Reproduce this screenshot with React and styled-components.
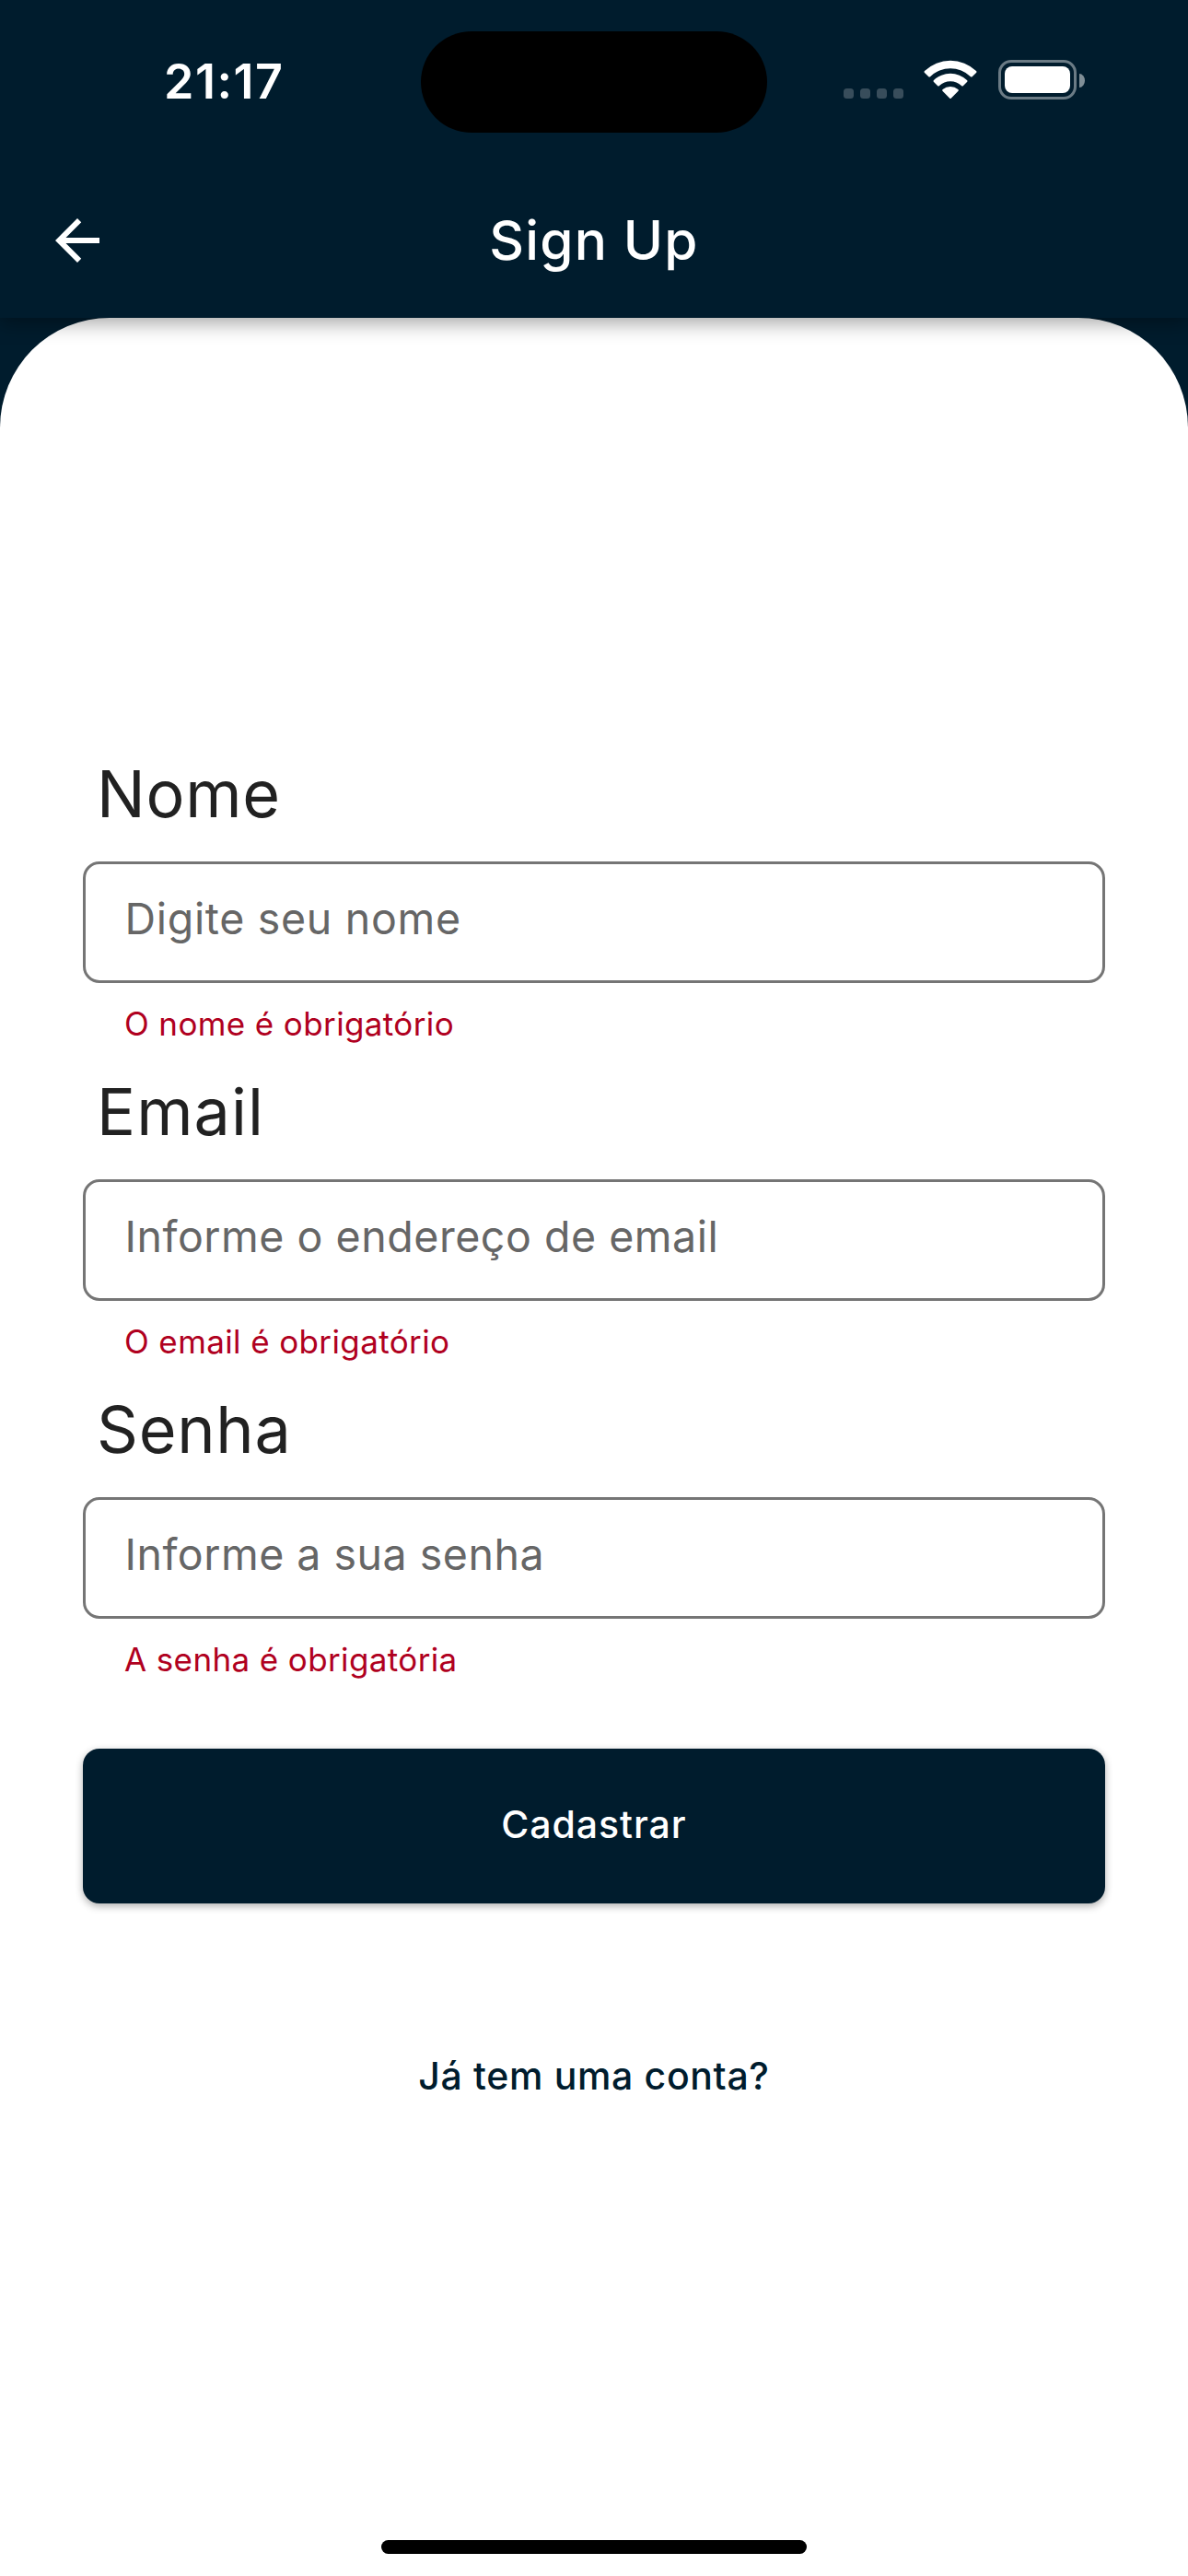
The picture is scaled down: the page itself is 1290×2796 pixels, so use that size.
import React from 'react';
import styled, { createGlobalStyle } from 'styled-components';

const navy = '#001c2d';

const GlobalStyle = createGlobalStyle`
  *, *::before, *::after { box-sizing: border-box; }
  body {
    margin: 0;
    background: #fff;
    font-family: Inter, "Liberation Sans", sans-serif;
  }
  button { font-family: inherit; border: 0; margin: 0; padding: 0; }
`;

const Screen = styled.div`
  display: flex;
  flex-direction: column;
  width: 1290px;
  height: 2796px;
  background: ${navy};
  overflow: hidden;
`;

const Header = styled.header`
  position: relative;
  z-index: 1;
  flex: none;
  background: ${navy};
  box-shadow: 0 6px 20px rgba(0, 0, 0, 0.35);
`;

const StatusBar = styled.div`
  display: grid;
  grid-template-columns: 457px 376px 457px;
  height: 177px;
`;

const Time = styled.span`
  padding-left: 178px;
  color: #fff;
  font-size: 52px;
  font-weight: 600;
  letter-spacing: 1.5px;
  line-height: 177px;
`;

const Island = styled.div`
  height: 110px;
  margin-top: 34px;
  border-radius: 55px;
  background: #000;
`;

const StatusIcons = styled.div`
  display: flex;
  align-items: flex-start;
  padding: 65px 0 0 83px;
`;

const SignalDots = styled.div`
  display: flex;
  gap: 7px;
  margin: 31px 22px 0 0;
`;

const Dot = styled.span`
  width: 11px;
  height: 11px;
  border-radius: 3.5px;
  background: rgba(255, 255, 255, 0.22);
`;

const WifiIcon = styled.svg`
  width: 58px;
  height: 42px;
  margin-right: 23px;
  fill: #fff;
`;

const Battery = styled.div`
  width: 85px;
  height: 43px;
  padding: 4px;
  border: 3px solid rgba(255, 255, 255, 0.42);
  border-radius: 14px;
`;

const BatteryLevel = styled.div`
  height: 100%;
  border-radius: 8px;
  background: #fff;
`;

const BatteryTip = styled.div`
  width: 6px;
  height: 15px;
  margin: 14.5px 0 0 3px;
  border-radius: 0 6px 6px 0 / 0 7.5px 7.5px 0;
  background: rgba(255, 255, 255, 0.5);
`;

const AppBar = styled.div`
  display: grid;
  grid-template-columns: 168px 1fr 168px;
  align-items: center;
  height: 168px;
`;

const BackButton = styled.button`
  display: flex;
  padding-left: 48px;
  background: none;
`;

const BackIcon = styled.svg`
  width: 72px;
  height: 72px;
  fill: #fff;
`;

const Title = styled.h1`
  margin: 0;
  color: #fff;
  font-size: 58.5px;
  font-weight: 500;
  letter-spacing: 1.19px;
  line-height: 72px;
  text-align: center;
`;

const Sheet = styled.main`
  display: flex;
  flex: 1;
  flex-direction: column;
  justify-content: space-between;
  align-items: center;
  padding-bottom: 24px;
  border-radius: 119px 119px 0 0;
  background: #fff;
`;

const Form = styled.form`
  display: flex;
  flex-direction: column;
  width: 1110px;
  padding-top: 468.5px;
`;

const Fields = styled.div`
  display: flex;
  flex-direction: column;
  gap: 23.5px;
`;

const Field = styled.div`
  display: flex;
  flex-direction: column;
`;

const Label = styled.label`
  margin-bottom: 25px;
  padding-left: 15px;
  color: #212121;
  font-size: 70px;
  letter-spacing: ${(p) => p.$tracking}px;
  line-height: 96px;
`;

const InputBox = styled.div`
  display: flex;
  align-items: center;
  height: 132px;
  padding: 0 42.5px 7px;
  border: 3px solid #757575;
  border-radius: 18px;
`;

const Hint = styled.span`
  color: #666;
  font-size: 46.5px;
  letter-spacing: ${(p) => p.$tracking}px;
  line-height: 60px;
  white-space: nowrap;
`;

const ErrorText = styled.p`
  margin: 20.5px 0 0;
  padding-left: 45px;
  color: #b00020;
  font-size: 35px;
  letter-spacing: 0.38px;
  line-height: 48px;
`;

const SubmitButton = styled.button`
  height: 168px;
  margin-top: 72.5px;
  padding-bottom: 3px;
  border-radius: 18px;
  background: ${navy};
  box-shadow: 0 3px 9px rgba(0, 0, 0, 0.32);
  color: #fff;
  font-size: 41px;
  font-weight: 500;
  letter-spacing: 0.94px;
`;

const LoginLink = styled.button`
  align-self: center;
  height: 144px;
  margin-top: 115.5px;
  background: none;
  color: ${navy};
  font-size: 41px;
  font-weight: 500;
  letter-spacing: 0.65px;
`;

const HomeIndicator = styled.div`
  width: 462px;
  height: 15px;
  border-radius: 8px;
  background: #000;
`;

const fields = [
  { label: 'Nome', labelTracking: 0.72, hint: 'Digite seu nome', hintTracking: 0.68, error: 'O nome é obrigatório' },
  { label: 'Email', labelTracking: 1.09, hint: 'Informe o endereço de email', hintTracking: 0.53, error: 'O email é obrigatório' },
  { label: 'Senha', labelTracking: 0.76, hint: 'Informe a sua senha', hintTracking: 0.5, error: 'A senha é obrigatória' },
];

export default function App() {
  return (
    <>
      <GlobalStyle />
      <Screen>
        <Header>
          <StatusBar>
            <Time>21:17</Time>
            <Island />
            <StatusIcons>
              <SignalDots>
                <Dot />
                <Dot />
                <Dot />
                <Dot />
              </SignalDots>
              <WifiIcon viewBox="0 0 172 126">
                <path d="M2 36A121 121 0 0 1 170 36Q173 39 170 42L157 55Q154 57 151 54A94 94 0 0 0 21 54Q18 57 15 55L2 42Q-1 39 2 36Z" />
                <path d="M32 66A78 78 0 0 1 140 66Q143 69 140 72L128 84Q125 87 122 84A52 52 0 0 0 50 84Q47 87 44 84L32 72Q29 69 32 66Z" />
                <path d="M61 96A39 39 0 0 1 111 96Q114 99 111 102L88 125Q86 127 84 125L61 102Q58 99 61 96Z" />
              </WifiIcon>
              <Battery>
                <BatteryLevel />
              </Battery>
              <BatteryTip />
            </StatusIcons>
          </StatusBar>
          <AppBar>
            <BackButton type="button" aria-label="Voltar">
              <BackIcon viewBox="0 0 24 24">
                <path d="M20 11H7.83l5.59-5.59L12 4l-8 8 8 8 1.41-1.41L7.83 13H20v-2z" />
              </BackIcon>
            </BackButton>
            <Title>Sign Up</Title>
          </AppBar>
        </Header>
        <Sheet>
          <Form>
            <Fields>
              {fields.map((field) => (
                <Field key={field.label}>
                  <Label $tracking={field.labelTracking}>{field.label}</Label>
                  <InputBox>
                    <Hint $tracking={field.hintTracking}>{field.hint}</Hint>
                  </InputBox>
                  <ErrorText>{field.error}</ErrorText>
                </Field>
              ))}
            </Fields>
            <SubmitButton type="button">Cadastrar</SubmitButton>
            <LoginLink type="button">Já tem uma conta?</LoginLink>
          </Form>
          <HomeIndicator />
        </Sheet>
      </Screen>
    </>
  );
}
